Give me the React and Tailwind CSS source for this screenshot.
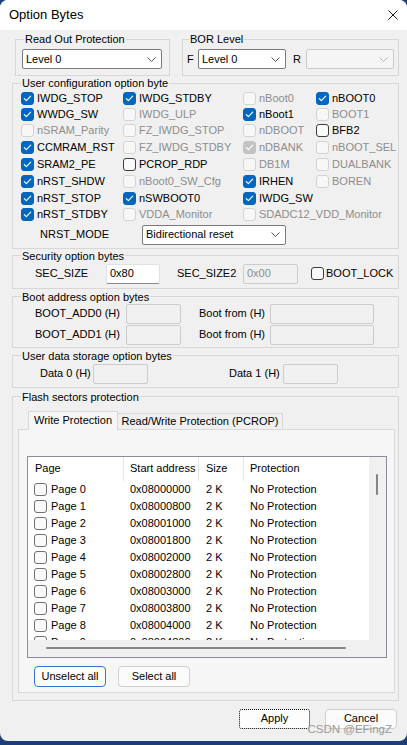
import React from "react";

const F = "font-['Liberation_Sans',Arial,sans-serif]";

function CheckMark() {
  return (
    <svg width="11" height="11" viewBox="0 0 11 11" className="block">
      <path d="M2.3 5.6 L4.4 7.6 L8.7 3.2" fill="none" stroke="white" strokeWidth="1.2" strokeLinecap="round" strokeLinejoin="round" />
    </svg>
  );
}

function Box({ s }) {
  const cls = {
    on: "bg-[#0067c0] border-[#0067c0]",
    dison: "bg-[#c3c3c3] border-[#c3c3c3]",
    off: "bg-[#fafafa] border-[#3c3c3c]",
    dis: "bg-[#f7f7f7] border-[#d3d3d3]",
    page: "bg-[#fafafa] border-[#707070]",
  }[s];
  return (
    <span className={`flex h-[13px] w-[13px] shrink-0 items-center justify-center rounded-[3px] border ${cls}`}>
      {(s === "on" || s === "dison") && <CheckMark />}
    </span>
  );
}

function Cb({ label, s, span }) {
  const dis = s === "dis" || s === "dison";
  return (
    <div className={`flex items-center gap-[3px] whitespace-nowrap ${span ? "col-span-2" : ""}`}>
      <Box s={s} />
      <span className={dis ? "text-[#8d8d8d]" : "text-black"}>{label}</span>
    </div>
  );
}

function Chevron({ disabled }) {
  return (
    <svg width="9" height="5" viewBox="0 0 9 5" className="block">
      <path d="M0.5 0.5 L4.5 4.5 L8.5 0.5" fill="none" stroke={disabled ? "#b5b5b5" : "#555"} strokeWidth="1" />
    </svg>
  );
}

function Combo({ cls, text, disabled }) {
  return (
    <div
      className={`flex h-[20px] items-center justify-between rounded-[2px] border pl-[3px] pr-[5px] ${
        disabled ? "border-[#cccccc] bg-[#f5f5f5]" : "border-[#7a7a7a] bg-white"
      } ${cls}`}
    >
      <span className="whitespace-nowrap">{text}</span>
      <Chevron disabled={disabled} />
    </div>
  );
}

function Input({ cls, value, disabled }) {
  return (
    <div
      className={`flex h-[20px] items-center rounded-[2px] border pl-[3px] ${
        disabled
          ? "border-[#cccccc] bg-[#f0f0f0] text-[#8d8d8d]"
          : "border-[#e1e1e1] border-b-[#8a8a8a] bg-white text-black"
      } ${cls}`}
    >
      {value}
    </div>
  );
}

function Group({ title, cls, legendCls = "ml-[8px]", bodyCls, children }) {
  return (
    <fieldset className={`border border-[#d7d7d7] ${cls}`}>
      <legend className={`px-[1px] leading-[14px] ${legendCls}`}>{title}</legend>
      <div className={bodyCls}>{children}</div>
    </fieldset>
  );
}

const grid = [
  [["IWDG_STOP", "on"], ["IWDG_STDBY", "on"], ["nBoot0", "dis"], ["nBOOT0", "on"]],
  [["WWDG_SW", "on"], ["IWDG_ULP", "dis"], ["nBoot1", "on"], ["BOOT1", "dis"]],
  [["nSRAM_Parity", "dis"], ["FZ_IWDG_STOP", "dis"], ["nDBOOT", "dis"], ["BFB2", "off"]],
  [["CCMRAM_RST", "on"], ["FZ_IWDG_STDBY", "dis"], ["nDBANK", "dison"], ["nBOOT_SEL", "dis"]],
  [["SRAM2_PE", "on"], ["PCROP_RDP", "off"], ["DB1M", "dis"], ["DUALBANK", "dis"]],
  [["nRST_SHDW", "on"], ["nBoot0_SW_Cfg", "dis"], ["IRHEN", "on"], ["BOREN", "dis"]],
  [["nRST_STOP", "on"], ["nSWBOOT0", "on"], ["IWDG_SW", "on"], null],
  [["nRST_STDBY", "on"], ["VDDA_Monitor", "dis"], ["SDADC12_VDD_Monitor", "dis", true]],
];

const pages = Array.from({ length: 10 }, (_, i) => ({
  name: `Page ${i}`,
  addr: "0x" + (0x08000000 + i * 0x800).toString(16).toUpperCase().padStart(8, "0"),
}));

export default function App() {
  return (
    <div className={`h-[745px] w-[407px] overflow-hidden bg-[#1d3f78] ${F} text-[11px] leading-[13px] text-black`}>
      <div className="flex h-[741px] w-[407px] flex-col overflow-hidden rounded-[8px] bg-[#f0f0f0]">
        {/* Title bar */}
        <div className="flex h-[30px] shrink-0 items-center justify-between bg-white pl-[9px] pr-[9px]">
          <span className="text-[13px] leading-[16px]">Option Bytes</span>
          <svg width="10" height="10" viewBox="0 0 10 10" className="block">
            <path d="M0.5 0.5 L9.5 9.5 M9.5 0.5 L0.5 9.5" stroke="#1a1a1a" strokeWidth="1" />
          </svg>
        </div>

        {/* Read out / BOR */}
        <div className="mt-[2px] flex">
          <Group title="Read Out Protection" cls="ml-[15px] w-[155px]" bodyCls="pl-[6px] pt-[3px] pb-[6px]">
            <Combo cls="w-[140px]" text="Level 0" />
          </Group>
          <Group
            title="BOR Level"
            cls="ml-[12px] w-[217px]"
            legendCls="ml-[6px]"
            bodyCls="flex items-center pl-[4px] pt-[3px] pb-[6px]"
          >
            <span className="w-[11px]">F</span>
            <Combo cls="w-[88px]" text="Level 0" />
            <span className="ml-[7px] w-[13px]">R</span>
            <Combo cls="w-[88px]" disabled />
          </Group>
        </div>

        {/* User configuration */}
        <Group title="User configuration option byte" cls="ml-[12px] w-[387px]" bodyCls="pl-[8px] pb-[3px]">
          <div className="grid grid-cols-[102px_120px_73px_1fr] grid-rows-[16.4px_16.4px_16.4px_17.2px_17.2px_16.4px_16.4px_16.4px]">
            {grid.map((row, ri) =>
              row.map((c, ci) =>
                c ? <Cb key={`${ri}-${ci}`} label={c[0]} s={c[1]} span={c[2]} /> : <div key={`${ri}-${ci}`} />
              )
            )}
          </div>
          <div className="mt-[2.2px] flex items-center">
            <span className="w-[121px] pl-[19px]">NRST_MODE</span>
            <Combo cls="w-[144px]" text="Bidirectional reset" />
          </div>
        </Group>

        {/* Security */}
        <Group title="Security option bytes" cls="ml-[12px] w-[387px]" bodyCls="flex items-center pl-[22px] pt-[1px] pb-[4px]">
          <span className="w-[71px]">SEC_SIZE</span>
          <Input cls="w-[54px]" value="0x80" />
          <span className="ml-[17px] w-[66px]">SEC_SIZE2</span>
          <Input cls="w-[55px]" value="0x00" disabled />
          <div className="ml-[13px] flex items-center gap-[2px]">
            <Box s="off" />
            <span>BOOT_LOCK</span>
          </div>
        </Group>

        {/* Boot address */}
        <Group title="Boot address option bytes" cls="ml-[12px] mt-[1px] w-[387px]" bodyCls="flex flex-col gap-[1px] pl-[22px] pb-[2px]">
          {["BOOT_ADD0 (H)", "BOOT_ADD1 (H)"].map((l) => (
            <div key={l} className="flex items-center">
              <span className="w-[91px]">{l}</span>
              <Input cls="w-[55px]" disabled />
              <span className="ml-[18px] w-[71px]">Boot from (H)</span>
              <Input cls="w-[104px]" disabled />
            </div>
          ))}
        </Group>

        {/* User data */}
        <Group title="User data storage option bytes" cls="ml-[12px] mt-[1px] w-[387px]" bodyCls="flex items-center pl-[27px] pt-[1px] pb-[3px]">
          <span className="w-[53px]">Data 0 (H)</span>
          <Input cls="w-[55px]" disabled />
          <span className="ml-[81px] w-[54px]">Data 1 (H)</span>
          <Input cls="w-[55px]" disabled />
        </Group>

        {/* Flash sectors protection */}
        <Group title="Flash sectors protection" cls="ml-[12px] mt-[2px] w-[387px]" bodyCls="pl-[5px] pt-[7px] pb-[7px]">
          <div className="relative z-10 flex items-end pl-[10px]">
            <div className="-mb-px flex h-[19px] w-[90px] items-center justify-center border border-b-0 border-[#d9d9d9] bg-[#f6f6f6] pb-[1px]">
              Write Protection
            </div>
            <div className="flex h-[16px] w-[165px] items-center justify-center border border-b-0 border-l-0 border-[#d9d9d9]">
              Read/Write Protection (PCROP)
            </div>
          </div>
          <div className="w-[377px] border border-[#d9d9d9] bg-[#f6f6f6] pl-[8px] pt-[26px] pb-[5px]">
            <div className="flex h-[202px] w-[360px] flex-col border border-[#8c8c98] bg-white">
              <div className="flex h-[183px]">
                <div className="w-[341px] overflow-hidden bg-white">
                  <div className="grid h-[24px] grid-cols-[96px_75px_45px_1fr]">
                    <div className="flex items-center border-r border-[#e5e5e5] pl-[7px]">Page</div>
                    <div className="flex items-center border-r border-[#e5e5e5] pl-[6px]">Start address</div>
                    <div className="flex items-center border-r border-[#e5e5e5] pl-[7px]">Size</div>
                    <div className="flex items-center pl-[6px]">Protection</div>
                  </div>
                  {pages.map((p) => (
                    <div key={p.name} className="grid h-[17px] grid-cols-[96px_75px_45px_1fr] items-center">
                      <div className="flex items-center gap-[4px] pl-[6px]">
                        <Box s="page" />
                        <span>{p.name}</span>
                      </div>
                      <div className="pl-[6px]">{p.addr}</div>
                      <div className="pl-[7px]">2 K</div>
                      <div className="pl-[6px]">No Protection</div>
                    </div>
                  ))}
                </div>
                <div className="flex w-[17px] flex-col bg-[#f0f0f0] pl-[7px] pt-[17px]">
                  <div className="h-[21px] w-[2px] rounded-[1px] bg-[#858585]" />
                </div>
              </div>
              <div className="flex h-[17px] items-center bg-[#f0f0f0] pl-[18px]">
                <div className="h-[2px] w-[300px] rounded-[1px] bg-[#858585]" />
              </div>
            </div>
            <div className="mt-[8px] flex">
              <button className="ml-[7px] flex h-[21px] w-[72px] items-center justify-center rounded-[4px] border border-[#2b79d0] bg-[#fdfdfd]">
                Unselect all
              </button>
              <button className="ml-[12px] flex h-[21px] w-[72px] items-center justify-center rounded-[4px] border border-[#d0d0d0] bg-[#fbfbfb]">
                Select all
              </button>
            </div>
          </div>
        </Group>

        {/* Bottom buttons */}
        <div className="relative mt-[8px] flex justify-end gap-[15px] pr-[10px]">
          <button className="flex h-[20px] w-[71px] items-center justify-center rounded-[3px] border border-dotted border-black bg-[#fdfdfd]">
            Apply
          </button>
          <button className="flex h-[20px] w-[72px] items-center justify-center rounded-[4px] border border-[#d0d0d0] bg-[#fbfbfb]">
            Cancel
          </button>
          <span className="pointer-events-none absolute right-[15px] top-[13px] text-[11.5px] leading-[14px] text-[#9a9a9a]">
            CSDN @EFingZ
          </span>
        </div>
      </div>
    </div>
  );
}
